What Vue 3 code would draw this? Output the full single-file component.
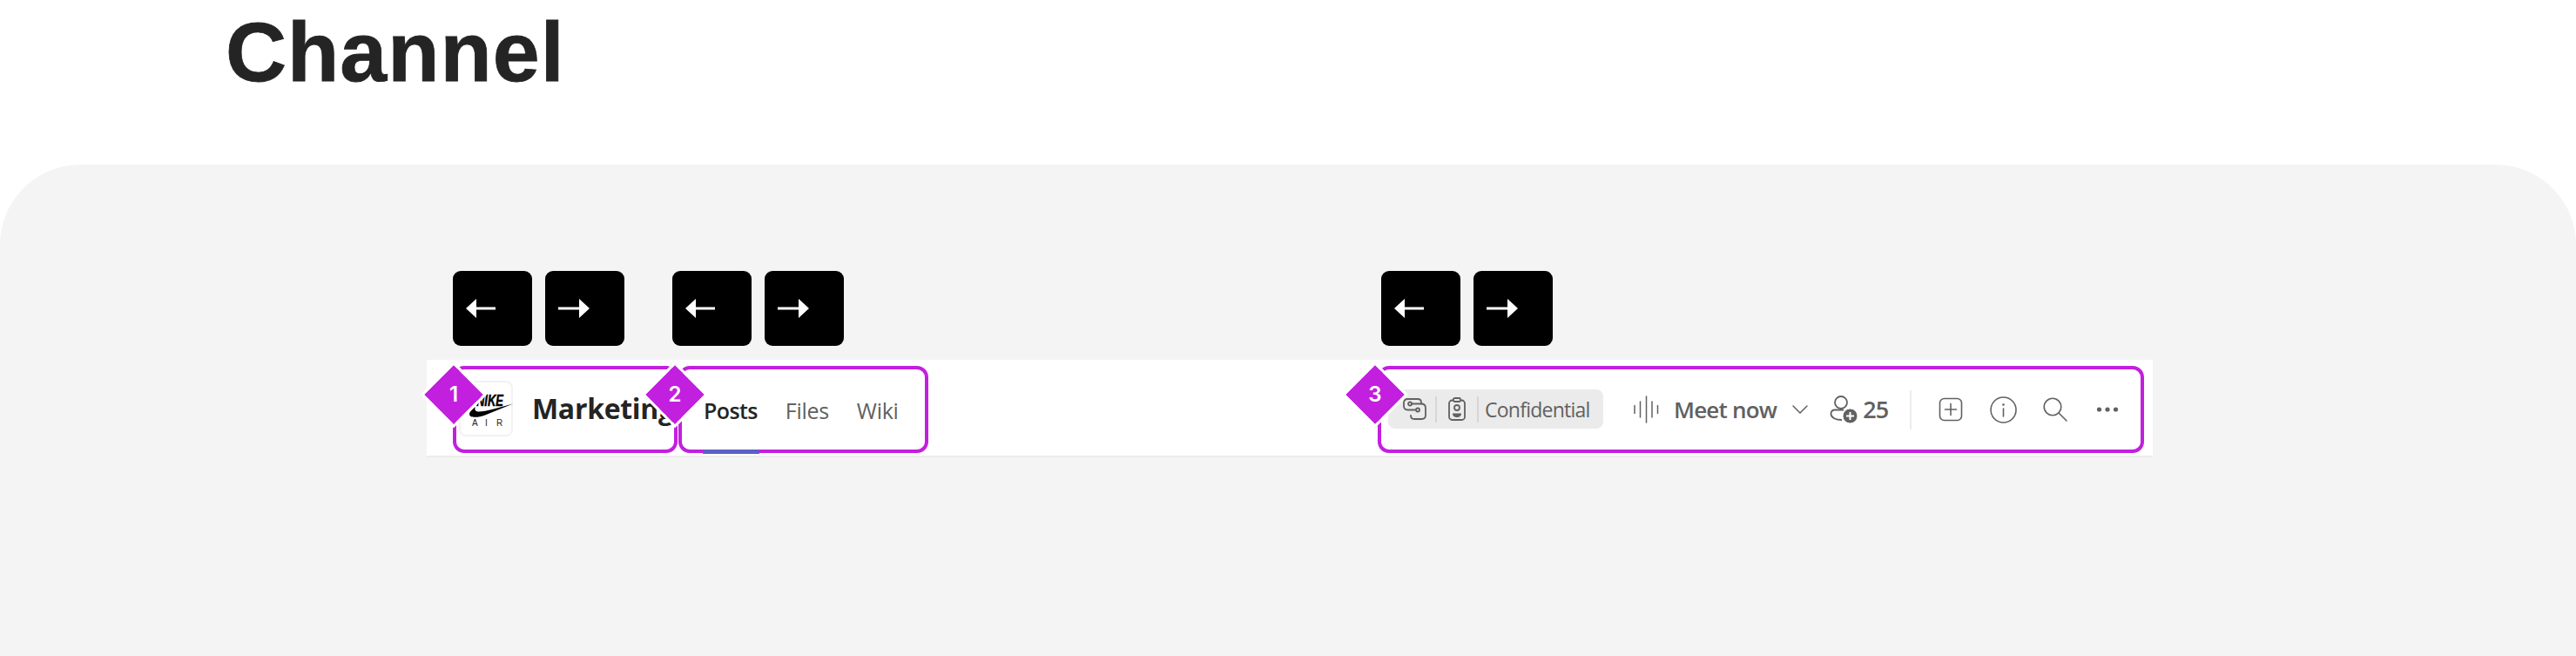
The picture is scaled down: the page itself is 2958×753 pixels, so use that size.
<script setup>
const arrowGroups = [
  { id: "brand", offset: "group-brand" },
  { id: "tabs", offset: "group-tabs" },
  { id: "actions", offset: "group-actions" },
];

const tabs = [
  { name: "Posts", active: true },
  { name: "Files", active: false },
  { name: "Wiki", active: false },
];
</script>

<template>
  <div class="page">
    <h1 class="title">Channel</h1>

    <main class="panel">
      <div class="arrow-row">
        <div v-for="group in arrowGroups" :key="group.id" class="arrow-group" :class="group.offset">
          <span class="arrow-key">
            <svg width="35" height="22" viewBox="0 0 35 22" fill="#fff">
              <path d="M0 11 L12 0 V9.4 H34 V12.6 H12 V22Z" />
            </svg>
          </span>
          <span class="arrow-key">
            <svg width="36" height="22" viewBox="0 0 36 22" fill="#fff">
              <path d="M36 11 L24 0 V9.4 H0 V12.6 H24 V22Z" />
            </svg>
          </span>
        </div>
      </div>

      <header class="channel-bar">
        <section class="zone zone-brand">
          <span class="marker marker-1">1</span>
          <div class="logo">
            <svg width="62" height="64" viewBox="0 0 62 64">
              <text class="nike-word" x="20" y="29" textLength="31" lengthAdjust="spacingAndGlyphs">NIKE</text>
              <path d="M62 26.5 L30 39.5 C22 42.5 12 43 12 38.5 C12 36 15 33 19 30 C17.5 33 18.5 35.5 23 35.5 C30 35.5 48 30.5 62 26.5Z" fill="#000" />
              <text class="air-word" x="15" y="52">A</text>
              <text class="air-word" x="30" y="52">I</text>
              <text class="air-word" x="43" y="52">R</text>
            </svg>
          </div>
          <span class="channel-name">Marketing</span>
        </section>

        <section class="zone zone-tabs">
          <span class="marker marker-2">2</span>
          <nav class="tabs">
            <a v-for="tab in tabs" :key="tab.name" class="tab" :class="{ active: tab.active }">{{ tab.name }}</a>
          </nav>
        </section>

        <section class="zone zone-actions">
          <span class="marker marker-3">3</span>

          <div class="label-pill">
            <svg class="pill-icon" width="27" height="25" viewBox="0 0 27 25" fill="none" stroke="#616161" stroke-width="1.8">
              <path d="M21 6.5 V5 Q21 1 17 1 H5.5 Q1 1 1 5.5 V9 Q1 13.5 5.5 13.5 H14" stroke-linecap="round" />
              <path d="M10 6.5 H21 Q26 6.5 26 11.5 V19.5 Q26 24 21.5 24 H13 Q9 24 9 20" stroke-linecap="round" />
              <circle cx="8" cy="6.5" r="2" fill="#ebebeb" />
              <circle cx="17" cy="13.5" r="2" fill="#ebebeb" />
            </svg>
            <i class="pill-sep"></i>
            <svg class="pill-icon badge-icon" width="20" height="27" viewBox="0 0 20 27" fill="none" stroke="#616161" stroke-width="1.8">
              <rect x="1" y="3.5" width="18" height="22.5" rx="3.5" />
              <rect x="6" y="1" width="8" height="4" rx="1.5" fill="#ebebeb" />
              <circle cx="10" cy="12" r="3" />
              <path d="M5 18.5 H15 C15 22 12.5 23 10 23 C7.5 23 5 22 5 18.5Z" fill="#616161" stroke="none" />
            </svg>
            <i class="pill-sep"></i>
            <span class="pill-text">Confidential</span>
          </div>

          <svg class="wave" width="29" height="32" viewBox="0 0 29 32" stroke="#616161" stroke-width="1.5" stroke-linecap="round">
            <path d="M1 11.5 V20.5 M7.5 7 V25 M14.5 1 V31 M21 7 V25 M27.5 11.5 V20.5" />
          </svg>
          <span class="meet">Meet now</span>
          <svg class="chevron" width="18" height="10" viewBox="0 0 18 10" fill="none" stroke="#616161" stroke-width="1.5" stroke-linecap="round">
            <path d="M1 1 L9 9 L17 1" />
          </svg>

          <svg class="people" width="33" height="32" viewBox="0 0 33 32" fill="none" stroke="#616161" stroke-width="1.8">
            <circle cx="13" cy="8" r="7" />
            <path d="M16 16.5 H6 Q1.5 16.5 1.5 21 C1.5 25.5 7 28 14 28" />
            <circle cx="23.5" cy="23.5" r="8.5" fill="#616161" stroke="#fff" stroke-width="1" />
            <path d="M23.5 19 V28 M19 23.5 H28" stroke="#fff" stroke-width="2" />
          </svg>
          <span class="count">25</span>
          <i class="bar-sep"></i>

          <div class="tools">
            <span class="tool">
              <svg width="28" height="28" viewBox="0 0 28 28" fill="none" stroke="#616161" stroke-width="1.6">
                <rect x="1.5" y="1.5" width="25" height="25" rx="5" />
                <path d="M14 7.5 V20.5 M7.5 14 H20.5" stroke-linecap="round" />
              </svg>
            </span>
            <span class="tool">
              <svg width="31" height="31" viewBox="0 0 31 31" fill="none" stroke="#616161" stroke-width="1.6">
                <circle cx="15.5" cy="15.5" r="14.5" />
                <path d="M15.5 14 V23" stroke-linecap="round" />
                <circle cx="15.5" cy="9.5" r="1.3" fill="#616161" stroke="none" />
              </svg>
            </span>
            <span class="tool">
              <svg width="28" height="28" viewBox="0 0 28 28" fill="none" stroke="#616161" stroke-width="1.6">
                <circle cx="11" cy="11" r="9.8" />
                <path d="M18 18 L27 27" stroke-linecap="round" />
              </svg>
            </span>
            <span class="tool">
              <svg width="26" height="6" viewBox="0 0 26 6" fill="#616161">
                <circle cx="3.5" cy="3" r="2.6" />
                <circle cx="13" cy="3" r="2.6" />
                <circle cx="22.5" cy="3" r="2.6" />
              </svg>
            </span>
          </div>
        </section>
      </header>
    </main>
  </div>
</template>

<style>
  html,
  body {
    margin: 0;
    background: #fff;
    overflow: hidden;
  }
</style>

<style scoped>
  .page {
    width: 2958px;
    height: 753px;
    display: flex;
    flex-direction: column;
    overflow: hidden;
    background: #fff;
  }

  .title {
    margin: 0 0 0 259px;
    height: 189px;
    font: 700 97px/119px "Liberation Sans", Arial, sans-serif;
    letter-spacing: 1px;
    -webkit-text-stroke: 0.8px #242424;
    color: #242424;
  }

  .panel {
    flex: 1;
    padding: 122px 0 0 490px;
    border-radius: 92px 92px 0 0;
    background: #f4f4f4;
  }

  .arrow-row {
    display: flex;
    height: 86px;
  }

  .arrow-group {
    display: flex;
    gap: 15px;
  }

  .group-brand {
    margin-left: 30px;
  }

  .group-tabs {
    margin-left: 55px;
  }

  .group-actions {
    margin-left: 617px;
  }

  .arrow-key {
    display: flex;
    align-items: center;
    box-sizing: border-box;
    width: 91px;
    height: 86px;
    padding: 0 0 1px 15px;
    border-radius: 9px;
    background: #000;
  }

  .channel-bar {
    display: flex;
    box-sizing: border-box;
    width: 1982px;
    height: 112px;
    margin-top: 16px;
    padding: 7px 10px 0 30px;
    gap: 1px;
    background: #fff;
    border-bottom: 2px solid #ececec;
  }

  .zone {
    position: relative;
    box-sizing: border-box;
    display: flex;
    align-items: center;
    height: 100px;
    border: 4px solid #c31fdf;
    border-radius: 13px;
  }

  .zone-brand {
    width: 258px;
    padding-left: 3px;
  }

  .zone-tabs {
    width: 287px;
    padding-left: 26px;
  }

  .zone-actions {
    width: 880px;
    margin-left: auto;
    padding-left: 8px;
  }

  .marker {
    position: absolute;
    z-index: 2;
    display: flex;
    align-items: center;
    justify-content: center;
    width: 62px;
    height: 62px;
    color: #fff;
    font: 600 24px/1 Inter, "Liberation Sans", sans-serif;
  }

  .marker::before {
    content: "";
    position: absolute;
    z-index: -1;
    inset: 7px;
    background: #c31fdf;
    outline: 3px solid #fff;
    transform: rotate(45deg);
  }

  .marker-1 {
    left: -34px;
    top: -2px;
  }

  .marker-2 {
    left: -39px;
    top: -2px;
  }

  .marker-3 {
    left: -38px;
    top: -2px;
  }

  .logo {
    flex: none;
    box-sizing: border-box;
    width: 62px;
    height: 64px;
    margin-top: -2px;
    border-radius: 8px;
    box-shadow: inset 0 0 0 2px #f2f2f2;
  }

  .logo svg {
    display: block;
  }

  .nike-word {
    font: italic 700 19px "Liberation Sans", sans-serif;
    stroke: #000;
    stroke-width: 0.5px;
    fill: #000;
  }

  .air-word {
    font: 400 10px "Liberation Sans", sans-serif;
    fill: #222;
  }

  .channel-name {
    margin-left: 22px;
    margin-top: -3px;
    font: 700 32px/44px "Open Sans", sans-serif;
    letter-spacing: -0.3px;
    color: #242424;
    white-space: nowrap;
  }

  .tabs {
    display: flex;
    gap: 32px;
    margin-top: 2px;
    margin-left: -1px;
  }

  .tab {
    position: relative;
    font: 400 25px/36px "Open Sans", sans-serif;
    letter-spacing: -0.3px;
    color: #616161;
  }

  .tab.active {
    color: #242424;
    font-weight: 600;
    letter-spacing: -0.6px;
  }

  .tab.active::after {
    content: "";
    position: absolute;
    left: -1px;
    right: -2px;
    top: 63px;
    height: 5px;
    border-radius: 3px 3px 0 0;
    background: #5b5fc7;
  }

  .label-pill {
    display: flex;
    align-items: center;
    box-sizing: border-box;
    width: 247px;
    height: 45px;
    margin-top: -1px;
    padding-left: 17px;
    border-radius: 8px;
    background: #ebebeb;
  }

  .pill-icon {
    flex: none;
  }

  .badge-icon {
    margin: 0 13px;
  }

  .pill-sep {
    width: 2px;
    height: 30px;
    margin-left: 10px;
    background: #d6d6d6;
  }

  .badge-icon + .pill-sep {
    margin-left: 0;
  }

  .pill-text {
    margin-left: 7px;
    font: 400 23px/32px "Open Sans", sans-serif;
    letter-spacing: -0.75px;
    color: #616161;
    white-space: nowrap;
  }

  .wave {
    flex: none;
    margin-left: 35px;
  }

  .meet {
    margin-left: 17px;
    font: 600 26px/38px "Open Sans", sans-serif;
    letter-spacing: -0.8px;
    color: #616161;
    white-space: nowrap;
  }

  .chevron {
    flex: none;
    margin-left: 18px;
  }

  .people {
    flex: none;
    margin-left: 25px;
  }

  .count {
    margin-left: 5px;
    font: 600 27px/38px "Open Sans", sans-serif;
    letter-spacing: -0.8px;
    color: #616161;
  }

  .bar-sep {
    width: 2px;
    height: 45px;
    margin-left: 25px;
    background: #ececec;
  }

  .tools {
    display: flex;
    margin-left: 15px;
  }

  .tool {
    display: flex;
    align-items: center;
    justify-content: center;
    width: 60px;
    height: 40px;
  }
</style>
